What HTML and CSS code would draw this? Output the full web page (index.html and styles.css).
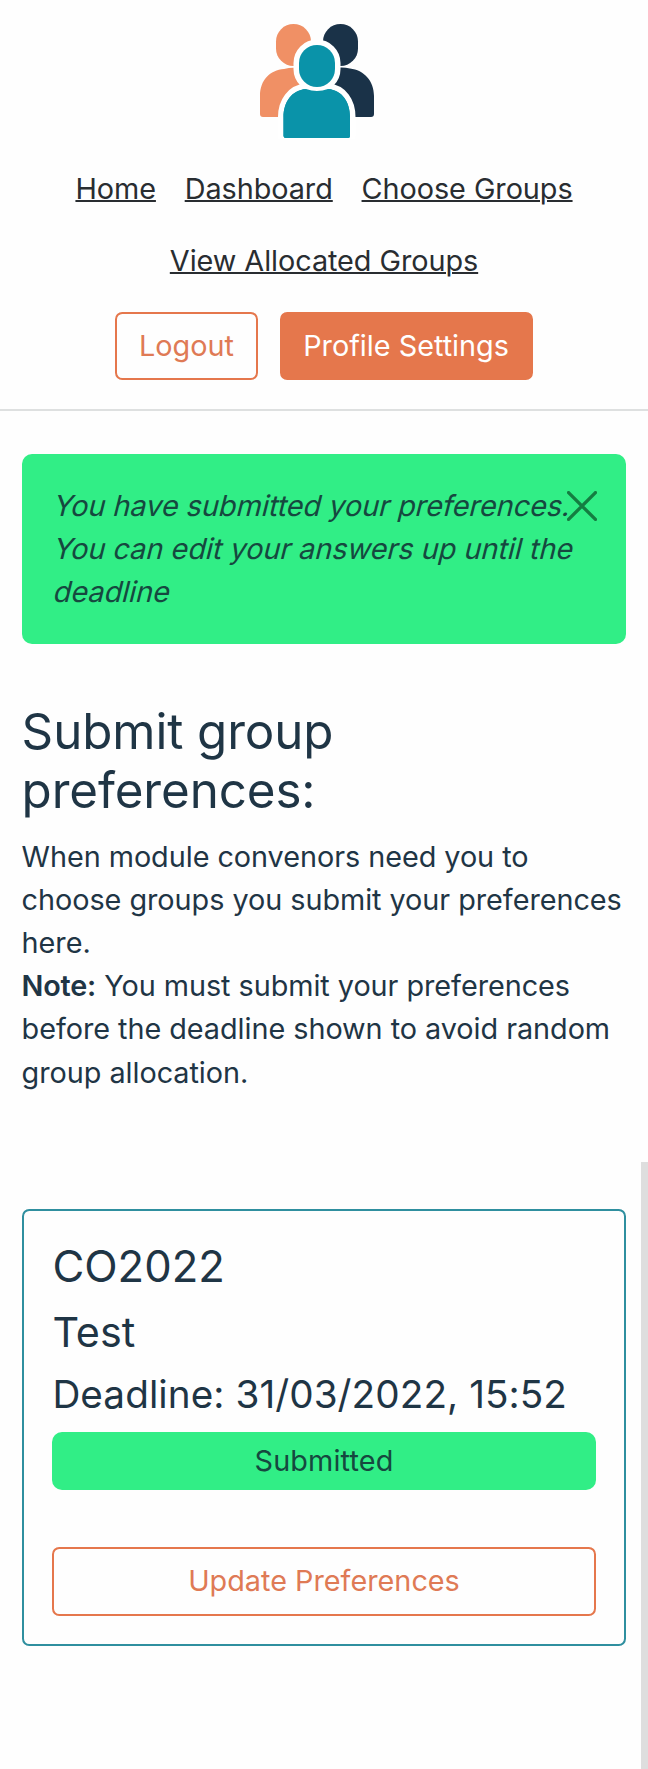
FILE: index.html
```
<!DOCTYPE html>
<html lang="en">
<head>
<meta charset="utf-8">
<title>Submit group preferences</title>
<link rel="stylesheet" href="styles.css">
</head>
<body>
<header class="header">
  <svg class="logo" viewBox="0 0 114 115" role="img" aria-label="Groups">
    <g fill="#f09065">
      <rect x="16" y="0" width="35" height="42" rx="17.5"/>
      <path d="M24 45Q33.500 42.500 43 45C61 49 63 58 63 68V93H3Q0 93 0 90V72C0 56 10 46 24 45Z"/>
    </g>
    <g fill="#1a3248">
      <rect x="63" y="0" width="35" height="42" rx="17.500"/>
      <path d="M71 45Q80.500 42.500 90 44.500C104 46 114 57 114 72V90Q114 93 111 93H51V68C51 56 58 46 71 45Z"/>
    </g>
    <g fill="#0a93a9" stroke="#fff" stroke-width="11" paint-order="stroke">
      <path d="M46 65Q57 69 68 65C82 66 90 78 90 93V112Q90 114 88 114H26Q23.500 114 23.500 112V93C23.500 78 32 66 46 65Z"/>
      <rect x="39" y="21" width="36" height="42" rx="18"/>
    </g>
    <path fill="#0a93a9" d="M46 65Q57 69 68 65C82 66 90 78 90 93V112Q90 114 88 114H26Q23.500 114 23.500 112V93C23.500 78 32 66 46 65Z"/>
  </svg>
  <nav class="nav">
    <a href="#">Home</a>
    <a href="#">Dashboard</a>
    <a href="#">Choose Groups</a>
    <a href="#">View Allocated Groups</a>
  </nav>
  <div class="actions">
    <button class="btn btn-outline">Logout</button>
    <button class="btn btn-solid">Profile Settings</button>
  </div>
</header>
<main class="main">
  <div class="alert">
    <em class="slanted">You have submitted your preferences.</em>
    <em class="slanted">You can edit your answers up until the</em>
    <em class="slanted">deadline</em>
    <button class="close" aria-label="Close">
      <svg viewBox="0 0 29 29"><path d="M1.500 1.500 27.500 27.500M27.500 1.500 1.500 27.500" stroke="#147d41" stroke-width="3.200" stroke-linecap="round"/></svg>
    </button>
  </div>
  <h1 class="title">Submit group<br>preferences:</h1>
  <p class="intro">When module convenors need you to<br>choose groups you submit your preferences<br>here.<br><strong>Note:</strong> You must submit your preferences<br>before the deadline shown to avoid random<br>group allocation.</p>
</main>
<section class="list">
  <article class="card">
    <h2 class="code">CO2022</h2>
    <h3 class="name">Test</h3>
    <h4 class="deadline">Deadline: 31/03/2022, 15:52</h4>
    <div class="status">Submitted</div>
    <button class="btn btn-outline btn-block">Update Preferences</button>
  </article>
</section>
</body>
</html>
```
FILE: styles.css
```
* { box-sizing: border-box; }
body {
  margin: 0;
  background: #fefefe;
  color: #1f3545;
  font: 400 28.8px/43.2px Inter, "Liberation Sans", sans-serif;
}
h1, h2, h3, h4, p { margin: 0; font-weight: 400; }
strong { font-weight: 600; letter-spacing: -0.2px; }
.header {
  display: flex;
  flex-direction: column;
  align-items: center;
  height: 410.6px;
  padding-top: 24px;
  border-bottom: 2px solid #dee0e0;
}
.logo { display: block; width: 114px; height: 115px; margin-right: 14px; }
.nav {
  display: flex;
  flex-wrap: wrap;
  justify-content: center;
  width: 604px;
  margin-top: 14px;
}
.nav a {
  padding: 14.4px;
  color: #292d31;
  letter-spacing: -0.05px;
  text-decoration-thickness: 2px;
  white-space: nowrap;
}
.actions { display: flex; gap: 22px; margin-top: 15px; }
.btn {
  height: 68.4px;
  padding: 0 21.6px 1px;
  border: 2px solid #e5774c;
  border-radius: 7.2px;
  font: inherit;
  white-space: nowrap;
}
.btn-outline { background: transparent; color: #df7a55; }
.btn-solid { background: #e5774c; color: #fff; }
.btn-block { width: 100%; }
.main { padding: 43.4px 21.6px 0; }
.alert {
  position: relative;
  height: 190.5px;
  padding: 30px 30.6px;
  border-radius: 10px;
  background: #31ee86;
  color: #16483f;
  white-space: nowrap;
}
.slanted {
  display: block;
  font-style: normal;
  transform: skewX(-14deg);
  transform-origin: 0 75%;
}
.close {
  position: absolute;
  top: 36.6px;
  right: 29.6px;
  width: 30px;
  height: 30px;
  padding: 0;
  border: 0;
  background: none;
}
.close svg { display: block; width: 30px; height: 30px; }
.title { margin-top: 57.6px; font-size: 49.32px; line-height: 59.2px; letter-spacing: -0.1px; }
.intro { margin-top: 14.2px; letter-spacing: -0.04px; white-space: nowrap; }
.list {
  height: 607px;
  margin-top: 68px;
  padding: 47.5px 14.6px 0 21.6px;
  border-right: 7px solid #dedede;
}
.card {
  height: 436.6px;
  padding: 29px 28.8px;
  border: 2px solid #2f8f9f;
  border-radius: 7.2px;
}
.code { font-size: 43.6px; line-height: 53px; }
.name { margin-top: 14.4px; font-size: 41.3px; line-height: 49.6px; }
.deadline { margin-top: 14px; font-size: 38.7px; line-height: 46.4px; letter-spacing: 0.06px; white-space: nowrap; }
.status {
  height: 57.6px;
  margin: 14.4px 0 57.6px;
  border-radius: 10px;
  background: #31ee86;
  color: #16483f;
  line-height: 57px;
  letter-spacing: 0.15px;
  text-align: center;
}
```
